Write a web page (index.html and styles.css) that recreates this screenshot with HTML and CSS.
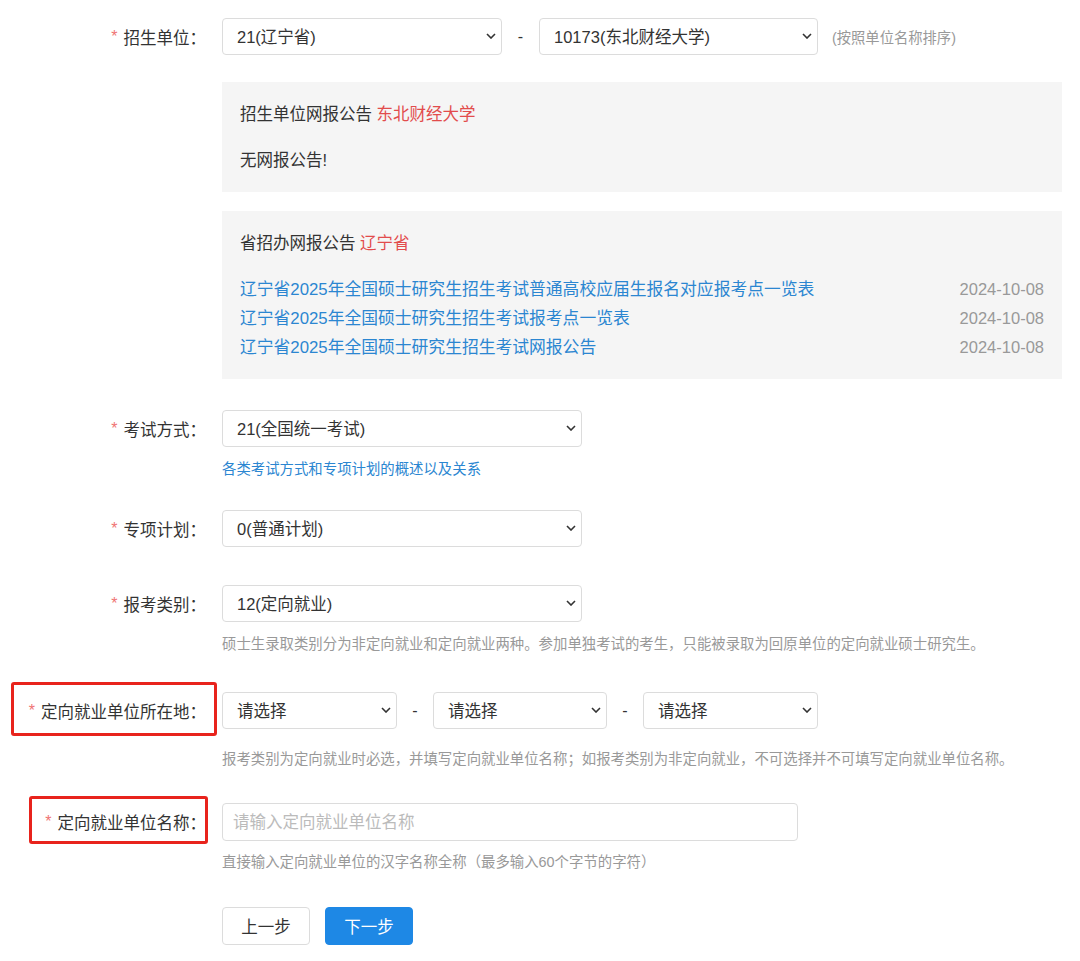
FILE: index.html
```html
<!DOCTYPE html>
<html lang="zh-CN">
<head>
<meta charset="utf-8">
<title>报名信息</title>
<link rel="stylesheet" href="styles.css">
</head>
<body>
<div class="form">
  <div class="row">
    <div class="lbl"><span class="req">*</span>招生单位：</div>
    <div class="field">
      <div class="line">
        <span class="sel w280"><select><option>21(辽宁省)</option></select><svg class="chev" viewBox="0 0 10 6"><path d="M1 1l4 4 4-4" fill="none" stroke="#333" stroke-width="1.6"/></svg></span>
        <span class="dash">-</span>
        <span class="sel w279"><select><option>10173(东北财经大学)</option></select><svg class="chev" viewBox="0 0 10 6"><path d="M1 1l4 4 4-4" fill="none" stroke="#333" stroke-width="1.6"/></svg></span>
        <span class="tip">(按照单位名称排序)</span>
      </div>
      <div class="notice n1">
        <div class="ntitle">招生单位网报公告 <span class="red">东北财经大学</span></div>
        <div class="ntext">无网报公告!</div>
      </div>
      <div class="notice n2">
        <div class="ntitle">省招办网报公告 <span class="red">辽宁省</span></div>
        <ul class="links">
          <li><a href="#">辽宁省2025年全国硕士研究生招生考试普通高校应届生报名对应报考点一览表</a><span class="date">2024-10-08</span></li>
          <li><a href="#">辽宁省2025年全国硕士研究生招生考试报考点一览表</a><span class="date">2024-10-08</span></li>
          <li><a href="#">辽宁省2025年全国硕士研究生招生考试网报公告</a><span class="date">2024-10-08</span></li>
        </ul>
      </div>
    </div>
  </div>

  <div class="row r-exam">
    <div class="lbl"><span class="req">*</span>考试方式：</div>
    <div class="field">
      <span class="sel w360"><select><option>21(全国统一考试)</option></select><svg class="chev" viewBox="0 0 10 6"><path d="M1 1l4 4 4-4" fill="none" stroke="#333" stroke-width="1.6"/></svg></span>
      <div class="help"><a href="#" class="blue">各类考试方式和专项计划的概述以及关系</a></div>
    </div>
  </div>

  <div class="row r-plan">
    <div class="lbl"><span class="req">*</span>专项计划：</div>
    <div class="field">
      <span class="sel w360"><select><option>0(普通计划)</option></select><svg class="chev" viewBox="0 0 10 6"><path d="M1 1l4 4 4-4" fill="none" stroke="#333" stroke-width="1.6"/></svg></span>
    </div>
  </div>

  <div class="row r-type">
    <div class="lbl"><span class="req">*</span>报考类别：</div>
    <div class="field">
      <span class="sel w360"><select><option>12(定向就业)</option></select><svg class="chev" viewBox="0 0 10 6"><path d="M1 1l4 4 4-4" fill="none" stroke="#333" stroke-width="1.6"/></svg></span>
      <div class="help">硕士生录取类别分为非定向就业和定向就业两种。参加单独考试的考生，只能被录取为回原单位的定向就业硕士研究生。</div>
    </div>
  </div>

  <div class="row r-loc">
    <div class="lbl mark mark1"><span class="req">*</span>定向就业单位所在地：</div>
    <div class="field">
      <div class="line">
        <span class="sel w175"><select><option>请选择</option></select><svg class="chev" viewBox="0 0 10 6"><path d="M1 1l4 4 4-4" fill="none" stroke="#333" stroke-width="1.6"/></svg></span>
        <span class="dash d2">-</span>
        <span class="sel w174"><select><option>请选择</option></select><svg class="chev" viewBox="0 0 10 6"><path d="M1 1l4 4 4-4" fill="none" stroke="#333" stroke-width="1.6"/></svg></span>
        <span class="dash d2">-</span>
        <span class="sel w175"><select><option>请选择</option></select><svg class="chev" viewBox="0 0 10 6"><path d="M1 1l4 4 4-4" fill="none" stroke="#333" stroke-width="1.6"/></svg></span>
      </div>
      <div class="help h-loc">报考类别为定向就业时必选，并填写定向就业单位名称；如报考类别为非定向就业，不可选择并不可填写定向就业单位名称。</div>
    </div>
  </div>

  <div class="row r-name">
    <div class="lbl mark mark2"><span class="req">*</span>定向就业单位名称：</div>
    <div class="field">
      <input class="txt" type="text" placeholder="请输入定向就业单位名称">
      <div class="help h-name">直接输入定向就业单位的汉字名称全称（最多输入60个字节的字符）</div>
    </div>
  </div>

  <div class="actions">
    <button class="btn prev">上一步</button>
    <button class="btn next">下一步</button>
  </div>
</div>
</body>
</html>
```

FILE: styles.css
```css
* { box-sizing: border-box; }
html, body { margin: 0; padding: 0; background: #fff; }
body {
  font-family: "Liberation Sans", "Noto Sans CJK SC", sans-serif;
  color: #333;
  font-size: 16.5px;
}
.form { padding-top: 18px; width: 1080px; }
.row { display: flex; align-items: flex-start; }
.lbl {
  width: 222px;
  flex: none;
  height: 37px;
  display: flex;
  align-items: center;
  justify-content: flex-end;
  padding-right: 16px;
  font-size: 16.5px;
  color: #333;
  white-space: nowrap;
}
.req { color: #f07474; margin-right: 6px; font-size: 16px; }
.field { flex: none; width: 840px; }
.line { display: flex; align-items: center; }
.sel { position: relative; display: block; height: 37px; flex: none; }
.sel select {
  -webkit-appearance: none;
  appearance: none;
  display: block;
  width: 100%;
  height: 100%;
  border: 1px solid #dcdcdc;
  border-radius: 4px;
  background: #fff;
  padding: 0 26px 0 14px;
  font-family: "Liberation Sans", "Noto Sans CJK SC", sans-serif;
  font-size: 16.5px;
  color: #333;
  outline: none;
}
.chev { position: absolute; right: 6px; top: 15px; width: 10px; height: 6px; pointer-events: none; }
.w280 { width: 280px; }
.w279 { width: 279px; }
.w360 { width: 360px; }
.w175 { width: 175px; }
.w174 { width: 174px; }
.dash { width: 37px; text-align: center; color: #333; font-size: 16px; }
.d2 { width: 36px; }
.tip { margin-left: 14px; color: #999; font-size: 14.3px; }
.notice { background: #f5f5f5; padding: 20px 18px 20px 18px; }
.n1 { margin-top: 27px; height: 110px; }
.n2 { margin-top: 19px; height: 168px; }
.ntitle { line-height: 24px; font-size: 16.5px; }
.ntext { line-height: 24px; margin-top: 22px; }
.red { color: #e24c4c; }
.links { list-style: none; margin: 20px 0 0; padding: 0; }
.links li { display: flex; justify-content: space-between; line-height: 29px; }
.links a { color: #2b86d1; text-decoration: none; font-size: 16.8px; }
.date { color: #999; font-size: 16.5px; }
.help { margin-top: 12px; height: 20px; line-height: 20px; font-size: 14.4px; color: #999; white-space: nowrap; }
.blue { color: #2b86d1; text-decoration: none; }
.r-exam { margin-top: 31px; }
.r-plan { margin-top: 31px; }
.r-type { margin-top: 38px; }
.r-loc { margin-top: 38px; }
.h-loc { margin-top: 20px; }
.r-name { margin-top: 34px; }
.r-name .lbl { height: 38px; }
.txt {
  display: block;
  width: 576px;
  height: 38px;
  border: 1px solid #dcdcdc;
  border-radius: 4px;
  padding: 0 10px;
  font-family: "Liberation Sans", "Noto Sans CJK SC", sans-serif;
  font-size: 16.5px;
  color: #333;
  outline: none;
}
.txt::placeholder { color: #bbb; }
.h-name { margin-top: 11px; }
.mark { position: relative; }
.mark::after {
  content: "";
  position: absolute;
  border: 3px solid #e8231c;
  border-radius: 3px;
}
.mark1::after { left: 11px; right: 5px; top: -10px; bottom: -7px; }
.mark2::after { left: 29px; right: 14px; top: -7px; bottom: -3px; }
.actions { display: flex; gap: 15px; padding-left: 222px; margin-top: 35px; }
.btn {
  width: 88px;
  height: 38px;
  border-radius: 4px;
  font-family: "Liberation Sans", "Noto Sans CJK SC", sans-serif;
  font-size: 16.5px;
  cursor: pointer;
}
.prev { background: #fff; border: 1px solid #dcdcdc; color: #333; }
.next { background: #1e88e5; border: 1px solid #1e88e5; color: #fff; }
```
